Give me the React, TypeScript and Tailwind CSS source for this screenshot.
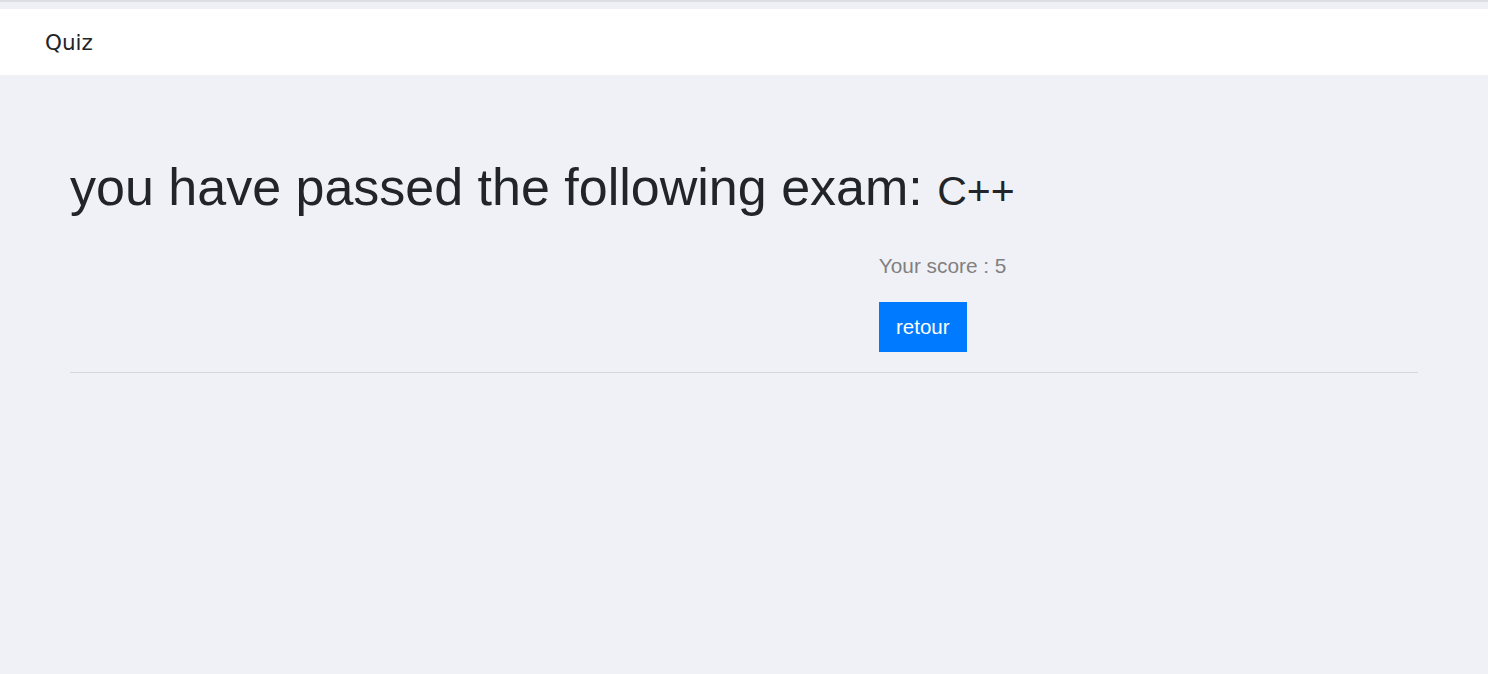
import React from "react";

export default function App() {
  return (
    <div className="min-h-[674px] bg-[#f0f1f6] font-['Liberation_Sans',Arial,sans-serif]">
      <div className="h-[2px] bg-[#dcdde3]" />
      <div className="h-[7px] bg-[#eff0f5]" />
      <nav className="h-[66px] bg-white pl-[45px] pt-[18px]">
        <span className="font-['DejaVu_Sans',sans-serif] text-[21.5px] leading-[31px] text-[#212529]">
          Quiz
        </span>
      </nav>
      <main className="px-[70px] pt-[81px]">
        <h1 className="text-[52px] leading-[62px] font-normal text-[#212529] whitespace-nowrap">
          you have passed the following exam:{" "}
          <span className="text-[41px]">C++</span>
        </h1>
        <div className="ml-[60%] mt-[29px]">
          <p className="text-[20.8px] leading-[30px] text-[#808080]">Your score : 5</p>
          <button className="mt-[21px] h-[50px] w-[88px] bg-[#007bff] text-[20.5px] text-white">
            retour
          </button>
        </div>
        <hr className="mt-[20px] border-0 border-t border-[#d6d7dc]" />
      </main>
    </div>
  );
}
